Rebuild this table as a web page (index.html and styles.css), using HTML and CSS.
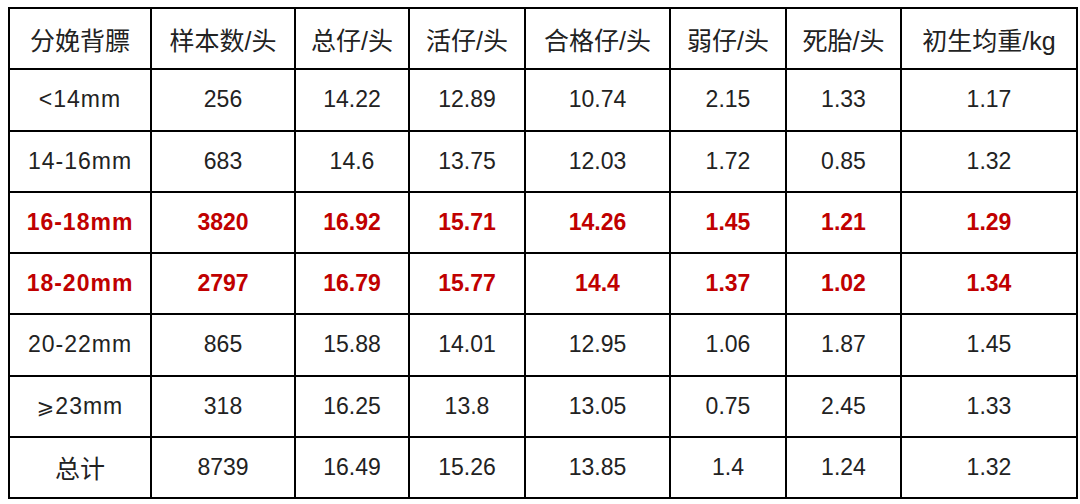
FILE: index.html
```html
<!DOCTYPE html>
<html lang="zh">
<head>
<meta charset="utf-8">
<link rel="stylesheet" href="styles.css">
</head>
<body>
<div class="wrap">
<table class="data">
<colgroup>
<col class="c1"><col class="c2"><col class="c3"><col class="c4"><col class="c5"><col class="c6"><col class="c7"><col class="c8">
</colgroup>
<thead>
<tr><th>分娩背膘</th><th>样本数/头</th><th>总仔/头</th><th>活仔/头</th><th>合格仔/头</th><th>弱仔/头</th><th>死胎/头</th><th>初生均重/kg</th></tr>
</thead>
<tbody>
<tr><td class="lbl">&lt;14mm</td><td>256</td><td>14.22</td><td>12.89</td><td>10.74</td><td>2.15</td><td>1.33</td><td>1.17</td></tr>
<tr><td class="lbl">14-16mm</td><td>683</td><td>14.6</td><td>13.75</td><td>12.03</td><td>1.72</td><td>0.85</td><td>1.32</td></tr>
<tr class="hl"><td class="lbl">16-18mm</td><td>3820</td><td>16.92</td><td>15.71</td><td>14.26</td><td>1.45</td><td>1.21</td><td>1.29</td></tr>
<tr class="hl"><td class="lbl">18-20mm</td><td>2797</td><td>16.79</td><td>15.77</td><td>14.4</td><td>1.37</td><td>1.02</td><td>1.34</td></tr>
<tr><td class="lbl">20-22mm</td><td>865</td><td>15.88</td><td>14.01</td><td>12.95</td><td>1.06</td><td>1.87</td><td>1.45</td></tr>
<tr><td class="lbl"><span class="ge">⩾</span>23mm</td><td>318</td><td>16.25</td><td>13.8</td><td>13.05</td><td>0.75</td><td>2.45</td><td>1.33</td></tr>
<tr><td class="zh">总计</td><td>8739</td><td>16.49</td><td>15.26</td><td>13.85</td><td>1.4</td><td>1.24</td><td>1.32</td></tr>
</tbody>
</table>
</div>
</body>
</html>
```
FILE: styles.css
```css
html, body {
  margin: 0;
  padding: 0;
  background: #ffffff;
}
.wrap {
  padding: 7px 0 0 8px;
}
.data {
  border-collapse: collapse;
  table-layout: fixed;
  width: 1068px;
  font-family: "Liberation Sans", "Noto Sans CJK SC", "DejaVu Sans", sans-serif;
  font-size: 23px;
  color: #222222;
}
.data th, .data td {
  border: 2.5px solid #000000;
  height: 59.25px;
  padding: 0;
  text-align: center;
  vertical-align: middle;
  font-weight: normal;
}
.data th, .data td.zh {
  font-size: 25px;
}
.data td.lbl {
  letter-spacing: 1px;
}
.ge {
  font-family: "DejaVu Sans", sans-serif;
  font-size: 21px;
}
.c1 { width: 142px; }
.c2 { width: 144px; }
.c3 { width: 114px; }
.c4 { width: 116px; }
.c5 { width: 145px; }
.c6 { width: 116px; }
.c7 { width: 115px; }
.c8 { width: 176px; }
.data tr.hl td {
  color: #c00000;
  font-weight: bold;
}
```
